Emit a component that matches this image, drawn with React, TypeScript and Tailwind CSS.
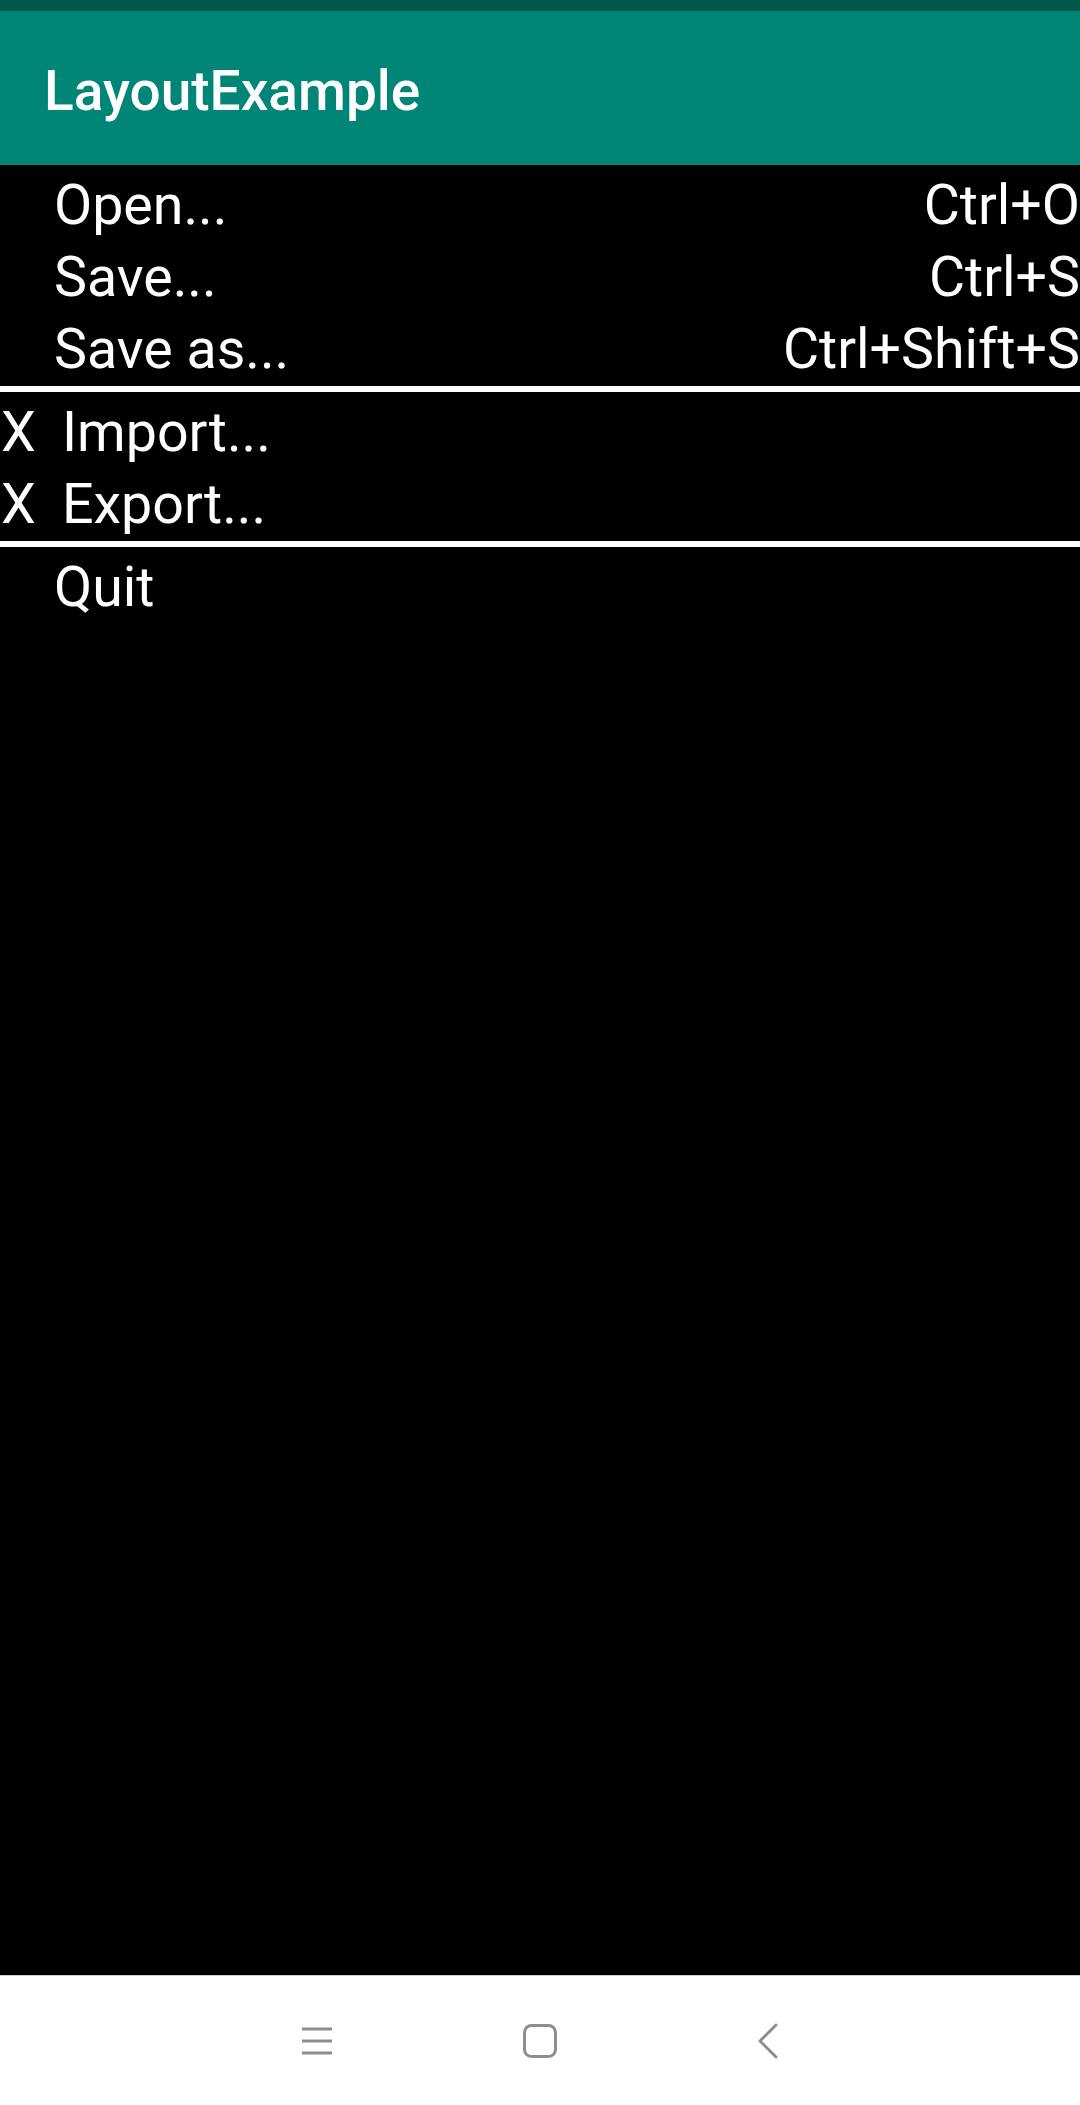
const items = [
    [
        { label: 'Open...', shortcut: 'Ctrl+O' },
        { label: 'Save...', shortcut: 'Ctrl+S' },
        { label: 'Save as...', shortcut: 'Ctrl+Shift+S' },
    ],
    [
        { label: 'Import...', checked: true },
        { label: 'Export...', checked: true },
    ],
    [
        { label: 'Quit' },
    ],
]

type Item = { label: string, shortcut?: string, checked?: boolean }

const MenuRow = ({ item }: { item: Item }) => {
    return (
        <div className='flex items-center h-[72px] leading-[72px] text-[55.5px] text-white whitespace-nowrap'>
            {item.checked
                ? <span className='w-[62px] shrink-0 pl-[1px]'>X</span>
                : <span className='w-[54px] shrink-0'></span>}
            <span className='flex-1'>{item.label}</span>
            {item.shortcut && <span className='text-right'>{item.shortcut}</span>}
        </div>
    )
}

const NavBar = () => {
    return (
        <div className='h-[130px] shrink-0 bg-white border-t border-[#cfcfcf] flex items-center'>
            <div className='ml-[287px] w-[60px] flex justify-center'>
                <svg width="30" height="28" viewBox="0 0 30 28" fill="none" stroke="#8e8e8e" strokeWidth="3">
                    <line x1="0" y1="2" x2="30" y2="2" />
                    <line x1="0" y1="14" x2="30" y2="14" />
                    <line x1="0" y1="26" x2="30" y2="26" />
                </svg>
            </div>
            <div className='ml-[163px] w-[60px] flex justify-center'>
                <svg width="34" height="34" viewBox="0 0 34 34" fill="none" stroke="#8e8e8e" strokeWidth="3">
                    <rect x="1.5" y="1.5" width="31" height="31" rx="7" />
                </svg>
            </div>
            <div className='ml-[168px] w-[60px] flex justify-center'>
                <svg width="20" height="36" viewBox="0 0 20 36" fill="none" stroke="#8e8e8e" strokeWidth="3" strokeLinecap="round" strokeLinejoin="round">
                    <polyline points="18,2 2,18 18,34" />
                </svg>
            </div>
        </div>
    )
}

const App = () => {
    return (
        <div className="h-[2105px] w-[1080px] flex flex-col bg-black font-['Roboto',sans-serif] overflow-hidden">
            <div className='h-[11px] shrink-0 bg-[#00574b]'></div>
            <div className='h-[154px] shrink-0 bg-[#008577] flex items-center pl-[44px] pt-[6px]'>
                <h1 className='text-white text-[55px] font-medium leading-none'>LayoutExample</h1>
            </div>
            <div className='flex-1'>
                {items.map((group, gi) => (
                    <div key={gi}>
                        {gi > 0 && <div className='h-[6px] bg-white'></div>}
                        <div className='pt-[5px]'>
                            {group.map((item) => <MenuRow key={item.label} item={item} />)}
                        </div>
                    </div>
                ))}
            </div>
            <NavBar />
        </div>
    )
}

export default App
